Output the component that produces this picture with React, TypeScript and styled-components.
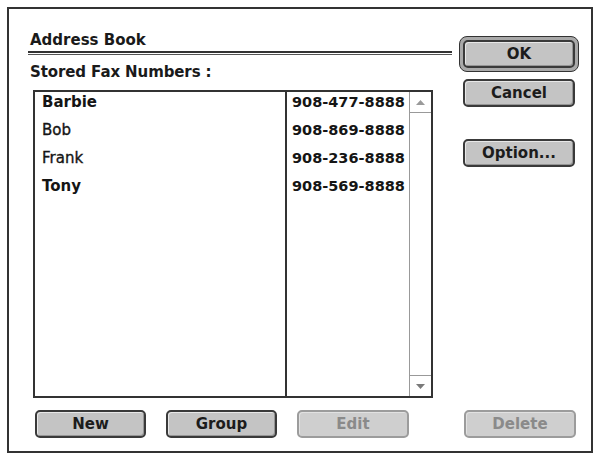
import React from "react";
import styled, { createGlobalStyle } from "styled-components";

const Global = createGlobalStyle`
  html, body { margin: 0; padding: 0; background: #ffffff; }
  body { font-family: "DejaVu Sans", "Liberation Sans", sans-serif; color: #1a1a1a; }
  * { box-sizing: border-box; }
`;

const Window = styled.div`
  margin: 7px 0 0 7px;
  width: 586px;
  height: 446px;
  border: 2px solid #333;
  background: #fff;
  display: grid;
  grid-template-columns: 424px 122px;
  grid-template-rows: 1fr 28px;
  column-gap: 6px;
  row-gap: 12px;
  padding: 23px 11px 13px 19px;
`;

const MainColumn = styled.div`
  display: flex;
  flex-direction: column;
  min-height: 0;
`;

const Title = styled.div`
  font-size: 15px;
  font-weight: bold;
  line-height: 16px;
  padding-left: 2px;
`;

const Rule = styled.div`
  margin-top: 3px;
  height: 4px;
  border-top: 2px solid #333;
  border-bottom: 1px solid #555;
`;

const Label = styled.div`
  margin-top: 9px;
  font-size: 15px;
  font-weight: bold;
  line-height: 16px;
  padding-left: 2px;
  letter-spacing: -0.1px;
`;

const ListBox = styled.div`
  margin-top: 10px;
  margin-left: 5px;
  width: 400px;
  flex: 1;
  border: 2px solid #333;
  display: grid;
  grid-template-columns: 250px 124px 1fr;
`;

const NameColumn = styled.div`
  display: flex;
  flex-direction: column;
`;

const PhoneColumn = styled.div`
  display: flex;
  flex-direction: column;
  border-left: 2px solid #333;
`;

const Row = styled.div<{ $bold?: boolean; $indent: number; $size?: number }>`
  height: 28px;
  line-height: 21px;
  font-size: ${(p) => p.$size ?? 15}px;
  padding-left: ${(p) => p.$indent}px;
  font-weight: ${(p) => (p.$bold ? "bold" : "normal")};
  -webkit-text-stroke: ${(p) => (p.$bold ? "0" : "0.35px #151515")};
  color: #151515;
  white-space: nowrap;
`;

const ScrollBar = styled.div`
  border-left: 1px solid #999;
  display: flex;
  flex-direction: column;
  justify-content: space-between;
`;

const ArrowBox = styled.div<{ $down?: boolean }>`
  height: 21px;
  display: flex;
  align-items: center;
  justify-content: center;
  ${(p) => (p.$down ? "border-top: 1px solid #999;" : "border-bottom: 1px solid #999;")}
`;

const SideColumn = styled.div`
  display: flex;
  flex-direction: column;
  align-items: center;
  padding-top: 4px;
`;

const DefaultRing = styled.div`
  border: 1px solid #333;
  border-radius: 8px;
  padding: 3px;
  background: #a9a9a9;
  display: flex;
`;

const Button = styled.button<{ $disabled?: boolean; $mt?: number; $w?: number }>`
  width: ${(p) => p.$w ?? 112}px;
  height: 28px;
  margin-top: ${(p) => p.$mt ?? 0}px;
  border-radius: 5px;
  border: 2px solid ${(p) => (p.$disabled ? "#9c9c9c" : "#3a3a3a")};
  background: ${(p) => (p.$disabled ? "#cfcfcf" : "#c4c4c4")};
  box-shadow: ${(p) =>
    p.$disabled
      ? "inset 1px 1px 0 #e2e2e2"
      : "inset 1px 1px 0 #e8e8e8, inset -1px -1px 0 #959595"};
  color: ${(p) => (p.$disabled ? "#8a8a8a" : "#1c1c1c")};
  font-family: "DejaVu Sans", "Liberation Sans", sans-serif;
  font-size: 15px;
  font-weight: bold;
  line-height: 20px;
  padding: 0;
  display: flex;
  align-items: center;
  justify-content: center;
`;

const BottomLeft = styled.div`
  display: flex;
  gap: 20px;
  padding-left: 7px;
`;

const BottomRight = styled.div`
  display: flex;
  justify-content: center;
  padding-left: 2px;
`;

const Arrow = ({ down }: { down?: boolean }) => (
  <svg width="9" height="5" viewBox="0 0 9 5">
    {down ? (
      <polygon points="0,0 9,0 4.5,5" fill="#7a7a7a" />
    ) : (
      <polygon points="0,5 9,5 4.5,0" fill="#9a9a9a" />
    )}
  </svg>
);

const entries = [
  { name: "Barbie", phone: "908-477-8888", bold: true },
  { name: "Bob", phone: "908-869-8888", bold: false },
  { name: "Frank", phone: "908-236-8888", bold: false },
  { name: "Tony", phone: "908-569-8888", bold: true },
];

export default function App() {
  return (
    <>
      <Global />
      <Window>
        <MainColumn>
          <Title>Address Book</Title>
          <Rule />
          <Label>Stored Fax Numbers :</Label>
          <ListBox>
            <NameColumn>
              {entries.map((e) => (
                <Row key={e.name} $bold={e.bold} $indent={7}>
                  {e.name}
                </Row>
              ))}
            </NameColumn>
            <PhoneColumn>
              {entries.map((e) => (
                <Row key={e.phone} $bold $indent={5} $size={14.5}>
                  {e.phone}
                </Row>
              ))}
            </PhoneColumn>
            <ScrollBar>
              <ArrowBox>
                <Arrow />
              </ArrowBox>
              <ArrowBox $down>
                <Arrow down />
              </ArrowBox>
            </ScrollBar>
          </ListBox>
        </MainColumn>
        <SideColumn>
          <DefaultRing>
            <Button>OK</Button>
          </DefaultRing>
          <Button $mt={7}>Cancel</Button>
          <Button $mt={32}>Option...</Button>
        </SideColumn>
        <BottomLeft>
          <Button $w={111}>New</Button>
          <Button $w={111}>Group</Button>
          <Button $disabled>Edit</Button>
        </BottomLeft>
        <BottomRight>
          <Button $disabled>Delete</Button>
        </BottomRight>
      </Window>
    </>
  );
}
